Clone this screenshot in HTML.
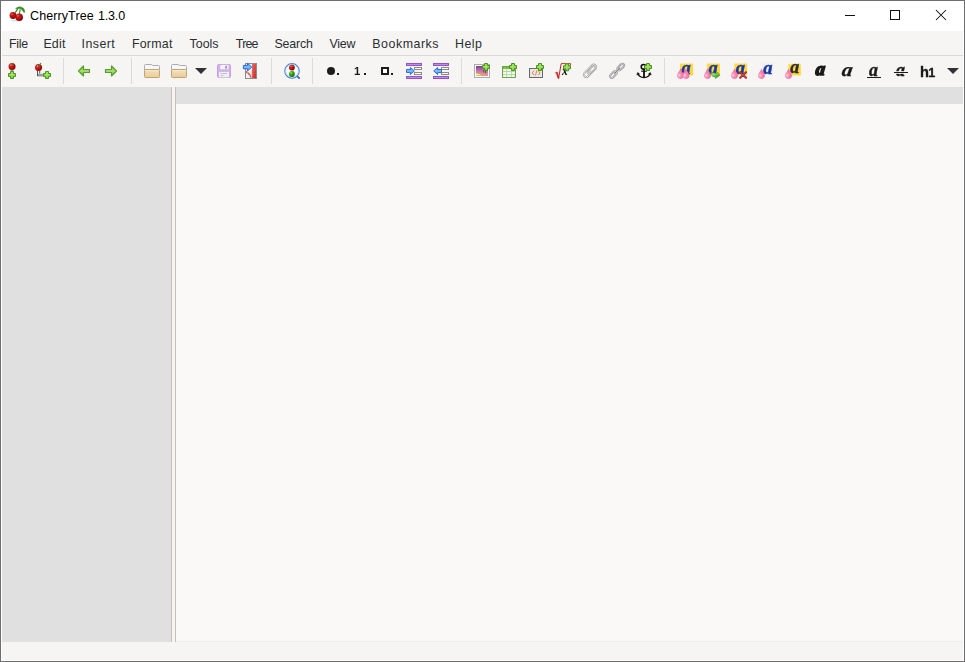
<!DOCTYPE html>
<html><head><meta charset="utf-8"><title>CherryTree 1.3.0</title>
<style>
html,body{margin:0;padding:0;}
body{width:965px;height:662px;overflow:hidden;position:relative;background:#f6f5f4;font-family:"Liberation Sans",sans-serif;color:#1a1a1a;}
.abs{position:absolute;}
#frame{left:0;top:0;width:963px;height:660px;border:1px solid #6e6e6e;z-index:50;pointer-events:none;}
#frame2{left:1px;top:1px;width:961px;height:658px;border:1px solid #fff;z-index:49;pointer-events:none;}
#title{left:1px;top:1px;width:963px;height:30px;background:#fff;}
#ttext{left:30px;top:9px;font-size:12.5px;color:#000;white-space:nowrap;}
#menu{left:2px;top:31px;width:961px;height:24px;background:#f6f5f4;border-bottom:1px solid #dbd9d6;}
.mi{position:absolute;top:37px;font-size:12.4px;color:#2a2e30;white-space:nowrap;}
#tb{left:2px;top:56px;width:961px;height:31px;background:#f6f5f4;}
.sep{position:absolute;top:58px;width:1px;height:26px;background:#dcdad7;}
#left{left:2px;top:87px;width:169px;height:555px;background:#e0e0e0;}
.vline{position:absolute;top:87px;width:1px;height:555px;background:#c6c0ba;}
#hdr{left:176px;top:87px;width:787px;height:17px;background:#e0e0e0;}
#text{left:176px;top:104px;width:787px;height:537px;background:#faf9f8;border-bottom:1px solid #eeedeb;}
#status{left:2px;top:642px;width:961px;height:18px;background:#f6f5f4;}
svg{position:absolute;overflow:visible;}
#tbicons,#tbicons2{will-change:transform;}
</style></head><body>
<div id="title" class="abs"></div>
<div id="ttext" class="abs"><span style="letter-spacing:0.1px">CherryTree</span><span class="abs" style="left:67.9px;top:0;letter-spacing:-0.15px">1.3.0</span></div>
<svg id="ticon" style="left:0;top:0" width="965" height="31" viewBox="0 0 965 31">
<ellipse cx="16.5" cy="20.6" rx="6" ry="1.2" fill="#cfe0e0" opacity="0.7"/>
<circle cx="13" cy="15.5" r="3.4" fill="url(#gCh2)"/>
<circle cx="19.2" cy="17.3" r="3.8" fill="url(#gCh2)"/>
<path d="M15.3 12.6L17.8 8.6M19.3 14.2L20.2 9.6" stroke="#2e8a14" stroke-width="1.1" fill="none"/>
<path d="M15.6 8.8c1.6-2.1 4.8-2.5 6.9-1.1c1.5 1 2.3 2.4 2 4.7c-1.1-0.3-1.7-1.3-2.2-2.5c-1.3-1.1-4-1.7-6.7-1.1z" fill="#2f9616" stroke="#2a8412" stroke-width="0.6"/>
<defs><radialGradient id="gCh2" cx="0.35" cy="0.3" r="0.75"><stop offset="0" stop-color="#e06464"/><stop offset="0.3" stop-color="#c01818"/><stop offset="0.75" stop-color="#a80808"/><stop offset="1" stop-color="#6c0000"/></radialGradient></defs>
<path d="M845 15.5h10" stroke="#111" stroke-width="1"/>
<rect x="890.5" y="10.5" width="9" height="9" fill="none" stroke="#111" stroke-width="1"/>
<path d="M936 10l10 10M946 10l-10 10" stroke="#111" stroke-width="1.05"/>
</svg>
<div id="menu" class="abs"></div>
<div class="mi" style="left:9px;letter-spacing:-0.3px">File</div>
<div class="mi" style="left:43.4px;letter-spacing:0.2px">Edit</div>
<div class="mi" style="left:81.6px;letter-spacing:0.44px">Insert</div>
<div class="mi" style="left:131.9px;letter-spacing:0.24px">Format</div>
<div class="mi" style="left:189.6px;letter-spacing:0.0px">Tools</div>
<div class="mi" style="left:235.8px;letter-spacing:-0.77px">Tree</div>
<div class="mi" style="left:274.4px;letter-spacing:-0.14px">Search</div>
<div class="mi" style="left:329.6px;letter-spacing:-0.27px">View</div>
<div class="mi" style="left:372.2px;letter-spacing:0.55px">Bookmarks</div>
<div class="mi" style="left:455px;letter-spacing:0.47px">Help</div>
<div id="tb" class="abs"></div>
<div class="sep" style="left:63px"></div>
<div class="sep" style="left:131px"></div>
<div class="sep" style="left:271px"></div>
<div class="sep" style="left:312px"></div>
<div class="sep" style="left:461px"></div>
<div class="sep" style="left:664px"></div>
<!--ICONS-->
<svg id="tbicons" style="left:0;top:56px" width="965" height="31" viewBox="0 56 965 31">
<defs>
<radialGradient id="gCh" cx="0.35" cy="0.3" r="0.75"><stop offset="0" stop-color="#f09090"/><stop offset="0.25" stop-color="#d02424"/><stop offset="0.7" stop-color="#b00c0c"/><stop offset="1" stop-color="#7c0404"/></radialGradient>
<radialGradient id="gGr" cx="0.35" cy="0.3" r="0.75"><stop offset="0" stop-color="#b0f070"/><stop offset="0.3" stop-color="#40b010"/><stop offset="0.75" stop-color="#1e8a08"/><stop offset="1" stop-color="#126004"/></radialGradient>
<linearGradient id="gPl" x1="0" y1="0" x2="0" y2="1"><stop offset="0" stop-color="#96e050"/><stop offset="1" stop-color="#6cc22c"/></linearGradient>
<linearGradient id="gAr" x1="0" y1="0" x2="0" y2="1"><stop offset="0" stop-color="#86c84a"/><stop offset="0.5" stop-color="#a6de70"/><stop offset="1" stop-color="#70bc34"/></linearGradient>
<linearGradient id="gFo" x1="0" y1="0" x2="0" y2="1"><stop offset="0" stop-color="#f3e0bf"/><stop offset="1" stop-color="#e8cc9c"/></linearGradient>
<linearGradient id="gBl" x1="0" y1="0" x2="0" y2="1"><stop offset="0" stop-color="#4a98f0"/><stop offset="0.5" stop-color="#7cc0ff"/><stop offset="1" stop-color="#3f8ae8"/></linearGradient>
<linearGradient id="gRd" x1="0" y1="0" x2="1" y2="1"><stop offset="0" stop-color="#ea6a58"/><stop offset="1" stop-color="#cf2a2a"/></linearGradient>
<linearGradient id="gPu" x1="0" y1="0" x2="0" y2="1"><stop offset="0" stop-color="#a865d8"/><stop offset="0.5" stop-color="#c08ae6"/><stop offset="1" stop-color="#a865d8"/></linearGradient>
<linearGradient id="gIm" x1="0" y1="0" x2="0" y2="1"><stop offset="0" stop-color="#7a3f96"/><stop offset="0.45" stop-color="#c070a8"/><stop offset="1" stop-color="#f2a49a"/></linearGradient>
<radialGradient id="gDr" cx="0.35" cy="0.65" r="0.7"><stop offset="0" stop-color="#ffc4da"/><stop offset="0.3" stop-color="#fb8db5"/><stop offset="1" stop-color="#f0609a"/></radialGradient>
<linearGradient id="gGa" x1="0" y1="0" x2="0.6" y2="1"><stop offset="0" stop-color="#6cc83c"/><stop offset="0.45" stop-color="#92dc64"/><stop offset="1" stop-color="#2c8a10"/></linearGradient>
<linearGradient id="gYe" x1="0" y1="0" x2="0" y2="1"><stop offset="0" stop-color="#fdf0c0"/><stop offset="0.13" stop-color="#ffd93c"/><stop offset="1" stop-color="#ffd632"/></linearGradient>
<g id="plus"><path d="M2.5 0.5h3v2h2v3h-2v2h-3v-2h-2v-3h2z" fill="url(#gPl)" stroke="#4a9422" stroke-width="1" stroke-linejoin="round"/><path d="M4 1.5v5M1.5 4h5" stroke="#c0f088" stroke-width="1" opacity="0.7"/></g>
<g id="drop"><path d="M3.5 0C4.1 2.3 6.9 4.6 6.9 7.1C6.9 9 5.4 10.4 3.5 10.4C1.6 10.4 0.1 9 0.1 7.1C0.1 4.6 2.9 2.3 3.5 0z" fill="url(#gDr)"/><ellipse cx="2" cy="6.8" rx="0.7" ry="1.1" fill="#ffd6e6" opacity="0.9"/></g>
<g id="folder"><path d="M0.5 6V1.5Q0.5 0.5 1.5 0.5H7.2Q8.2 0.5 8.6 1.5H14.5Q15.5 1.5 15.5 2.5V6z" fill="#f7f7f9" stroke="#a8aab4" stroke-width="1"/><rect x="0.5" y="5.5" width="15" height="8" rx="0.8" fill="url(#gFo)" stroke="#c2a56c" stroke-width="1"/><path d="M1.5 6.6h13" stroke="#f8ecd6" stroke-width="0.8"/></g>
</defs>
<!-- 1 node add -->
<path d="M10.5 70.5h3" stroke="#9a9a9a" stroke-width="1"/>
<circle cx="12.05" cy="66.5" r="3.5" fill="url(#gCh)"/>
<path d="M12 65l1.6-2" stroke="#2f9a1a" stroke-width="1.2"/>
<use href="#plus" x="8" y="71"/>
<!-- 2 subnode add -->
<path d="M37.5 71v5.2" stroke="#555" stroke-width="1"/><path d="M39.7 71v2.6" stroke="#4a4a4a" stroke-width="0.9"/>
<path d="M38 73.8h5.5v2.7H38z" fill="#9c9c9c"/>
<circle cx="38.55" cy="67.6" r="3.5" fill="url(#gCh)"/>
<path d="M38.6 66l2.4-2.8" stroke="#2f9a1a" stroke-width="1.2"/>
<use href="#plus" x="43" y="71"/>
<!-- arrows -->
<path d="M78.5 71l5-5v3.5h6v3h-6v3.5z" fill="url(#gAr)" stroke="#5a9e2a" stroke-width="1.2" stroke-linejoin="round"/>
<path d="M116.5 71l-5-5v3.5h-6v3h6v3.5z" fill="url(#gAr)" stroke="#5a9e2a" stroke-width="1.2" stroke-linejoin="round"/>
<!-- folders -->
<use href="#folder" x="144" y="64"/>
<use href="#folder" x="171" y="64"/>
<path d="M195 68h12l-6 6z" fill="#2e3436"/>
<!-- save (disabled) -->
<rect x="217.5" y="64.5" width="13" height="13" rx="1.3" fill="#d2b4ec" stroke="#c39de6" stroke-width="1"/>
<rect x="220.3" y="64.8" width="8.2" height="4.4" fill="#f4f2f6"/>
<rect x="225.2" y="65.8" width="1.7" height="2.9" fill="#a58fc0"/>
<rect x="219" y="72" width="10" height="5.4" fill="#f0eff0"/>
<path d="M220.5 73.5h6.5M220.5 75.5h3" stroke="#b9b9bd" stroke-width="0.8"/>
<!-- export pdf -->
<rect x="245.5" y="63.5" width="11" height="15" fill="#f1f0f0" stroke="#8e8e8e" stroke-width="1"/>
<path d="M252.4 64h3.6v14h-3.6z" fill="url(#gRd)"/>
<path d="M252.4 64l-2.2 14h2.2z" fill="#f3cfc8" opacity="0.8"/><path d="M252.6 64v14" stroke="#c83030" stroke-width="0.6"/>
<path d="M246 71.6c2.6 1.4 4.2 3.4 5 6.2" fill="none" stroke="#d83030" stroke-width="1.4" stroke-dasharray="1.5 0.4"/>
<path d="M243.4 65.4h4.2v-2l4.2 3.7l-4.2 3.7v-2h-4.2z" fill="url(#gBl)" stroke="#1f5fd0" stroke-width="0.9" stroke-linejoin="round"/>
<!-- find -->
<path d="M297.6 76.6l1.6 1.5" stroke="#2a62c8" stroke-width="1.7" stroke-linecap="round"/>
<circle cx="292" cy="70.9" r="7.2" fill="#fdfeff" stroke="#4a80d8" stroke-width="1.2"/>
<circle cx="292" cy="70.9" r="6.3" fill="none" stroke="#b8d4f8" stroke-width="0.9"/>
<circle cx="291.9" cy="67.6" r="2.9" fill="url(#gCh)"/>
<circle cx="291.9" cy="74" r="2.9" fill="url(#gGr)"/>
<path d="M292 65.6l0.9-1M292.6 71.6l0.9-1" stroke="#2fa01a" stroke-width="1"/>
<!-- lists -->
<circle cx="331" cy="71" r="4" fill="#1c1c1c"/><rect x="337" y="73" width="2" height="2" fill="#1c1c1c"/>
<text x="354" y="75" font-family="Liberation Sans,sans-serif" font-weight="bold" font-size="11.3" fill="#1c1c1c">1</text><rect x="364" y="73" width="2" height="2" fill="#1c1c1c"/>
<rect x="382" y="68" width="6" height="6" fill="#fff" stroke="#1c1c1c" stroke-width="2"/><rect x="391" y="73" width="2" height="2" fill="#1c1c1c"/>
<!-- indent -->
<g id="bars"><rect x="406.5" y="63.5" width="15" height="2" fill="#c08ae6" stroke="#9355cf" stroke-width="1"/><rect x="406.5" y="76.5" width="15" height="2" fill="#c08ae6" stroke="#9355cf" stroke-width="1"/><rect x="414.5" y="67.5" width="7" height="2" fill="#fff" stroke="#8a8a8a" stroke-width="1"/><rect x="414.5" y="72.5" width="7" height="2" fill="#fff" stroke="#8a8a8a" stroke-width="1"/></g>
<path d="M406.5 69.5h3.8v-2l4 3.5l-4 3.5v-2h-3.8z" fill="url(#gBl)" stroke="#2466d0" stroke-width="0.9" stroke-linejoin="round"/>
<use href="#bars" x="27"/>
<path d="M441.5 69.5h-3.8v-2l-4 3.5l4 3.5v-2h3.8z" fill="url(#gBl)" stroke="#2466d0" stroke-width="0.9" stroke-linejoin="round"/>
<!-- image -->
<rect x="474.5" y="64.5" width="15" height="13" fill="#fbfbfb" stroke="#acacac" stroke-width="1"/>
<rect x="476" y="66" width="12" height="10" fill="url(#gIm)"/>
<path d="M476 76v-3c3 0.2 5.6 1.2 7.6 3z" fill="#f0a040"/><path d="M476 76v-2.4c2.6 0.2 4.6 1 6.2 2.4z" fill="#ffe07a"/><path d="M476.4 75.6v-1.5c1.8 0.2 3.2 0.7 4.4 1.5z" fill="#fffad8"/><path d="M476 75.6h12" stroke="#c8944a" stroke-width="0.8" opacity="0.7"/>
<path d="M483.6 70.4v2M485.6 70.4v2.9" stroke="#3a2440" stroke-width="0.8" opacity="0.8"/>
<use href="#plus" x="482" y="63"/>
<!-- table -->
<rect x="502.5" y="66.5" width="13" height="11" fill="#b4d9a2" stroke="#69aa48" stroke-width="1"/>
<rect x="503" y="67" width="12" height="1.7" fill="#62b02c"/><path d="M504 67.9h2.4M507.6 67.9h2.6" stroke="#a8e070" stroke-width="0.6"/>
<g fill="#fff"><rect x="503.2" y="69.2" width="3" height="1.8"/><rect x="507.1" y="69.2" width="3.8" height="1.8"/><rect x="511.9" y="69.2" width="3" height="1.8"/><rect x="503.2" y="72.2" width="3" height="1.8"/><rect x="507.1" y="72.2" width="3.8" height="1.8"/><rect x="511.9" y="72.2" width="3" height="1.8"/><rect x="503.2" y="75.2" width="3" height="1.8"/><rect x="507.1" y="75.2" width="3.8" height="1.8"/><rect x="511.9" y="75.2" width="3" height="1.8"/></g>
<use href="#plus" x="509" y="63"/>
<!-- codebox -->
<rect x="529.5" y="68.5" width="13" height="9" fill="#e8e8e8" stroke="#686868" stroke-width="1"/>
<path d="M534 70.6l-1.7 2.3l1.7 2.3M538.3 70.6l1.7 2.3l-1.7 2.3M537 70.2l-1.6 5.4" fill="none" stroke="#f0742a" stroke-width="0.9"/>
<use href="#plus" x="536" y="63"/>
<!-- latex -->
<path d="M555.2 73l1.7-0.9" stroke="#d81c1c" stroke-width="0.9" fill="none"/><path d="M556.7 72.2l1.9 6.2" stroke="#d81c1c" stroke-width="1.7" fill="none"/><path d="M558.6 78.6l2.5-14.6" stroke="#d81c1c" stroke-width="1" fill="none"/><path d="M561 63.6h9.6v1.6h-0.9" stroke="#d81c1c" stroke-width="0.9" fill="none"/>
<text x="562" y="75" font-family="Liberation Serif,serif" font-style="italic" font-weight="bold" font-size="11.5" fill="#111">x</text>
<use href="#plus" x="563" y="63.3"/>
<!-- clip -->
<g transform="translate(590 70.85) rotate(-45)" fill="none"><rect x="-7.6" y="-2.4" width="15.2" height="4.8" rx="2.4" stroke="#9a9a9a" stroke-width="1.9"/><rect x="-7.6" y="-2.4" width="15.2" height="4.8" rx="2.4" stroke="#f2f2f2" stroke-width="0.9"/><rect x="-2.9" y="-1.0" width="8.9" height="2.7" rx="1.35" stroke="#989898" stroke-width="1.8"/><rect x="-2.9" y="-1.0" width="8.9" height="2.7" rx="1.35" stroke="#ececec" stroke-width="0.8"/><rect x="1.2" y="-0.3" width="4" height="1.3" rx="0.6" fill="#fff"/></g>
<!-- chain -->
<g transform="translate(617.1 70.8) rotate(-45)" fill="none"><path d="M-4 0h8" stroke="#858585" stroke-width="1.1"/><rect x="-9.2" y="-1.75" width="8" height="3.5" rx="1.75" stroke="#8a8a8a" stroke-width="1.9"/><rect x="-9.2" y="-1.75" width="8" height="3.5" rx="1.75" stroke="#e8e8e8" stroke-width="0.8"/><rect x="1.2" y="-1.75" width="8" height="3.5" rx="1.75" stroke="#8a8a8a" stroke-width="1.9"/><rect x="1.2" y="-1.75" width="8" height="3.5" rx="1.75" stroke="#e8e8e8" stroke-width="0.8"/><path d="M-3.5 0h7" stroke="#858585" stroke-width="0.9"/></g>
<!-- anchor -->
<g fill="none" stroke="#111"><circle cx="643.5" cy="66.8" r="2.3" stroke-width="1.6"/><path d="M644 69v8.5" stroke-width="1.8"/><path d="M641.2 71.2h5.6" stroke-width="1.1"/><path d="M638 73.6c0.8 2.6 3 3.9 6 3.9s5.2-1.3 6-3.9" stroke-width="1.4"/><path d="M636.8 75l0.8-2.6l2 1.6zM651.2 75l-0.8-2.6l-2 1.6z" fill="#111" stroke-width="0.5"/></g>
<use href="#plus" x="644" y="63"/>
</svg>
<svg id="tbicons2" style="left:0;top:56px" width="965" height="31" viewBox="0 56 965 31">
<g font-family="Liberation Serif,serif" font-style="italic" font-weight="bold">
<!-- A: fg+bg -->
<rect x="680" y="63" width="13" height="12.4" fill="url(#gYe)"/>
<text x="681.6" y="73.5" font-size="18.5" fill="#1838a8" stroke="#1838a8" stroke-width="0.45">a</text>
<use href="#drop" x="677" y="68.6"/><use href="#drop" x="682.5" y="68.6"/>
<!-- B -->
<rect x="707" y="63" width="13" height="12.4" fill="url(#gYe)"/>
<text x="708.6" y="73.5" font-size="18.5" fill="#1838a8" stroke="#1838a8" stroke-width="0.45">a</text>
<use href="#drop" x="704" y="68.6"/>
<path d="M711.2 71.4C712.5 72.6 714.6 73.3 717 73.2L717.5 72.2L720 75.3L715.4 78.5L715.7 77C713.6 77.1 711.8 76 711.2 74.4z" fill="url(#gGa)" stroke="#3a9018" stroke-width="0.5" stroke-linejoin="round"/>
<!-- C -->
<rect x="734.4" y="63" width="12.6" height="12.2" fill="url(#gYe)"/>
<text x="735.8" y="73.5" font-size="18.5" fill="#1838a8" stroke="#1838a8" stroke-width="0.45">a</text>
<use href="#drop" x="731" y="68.6"/>
<path d="M740.2 72.2l5.8 5.6M746 72.2l-5.8 5.6" stroke="#a82434" stroke-width="2.1" stroke-linecap="round"/>
<path d="M740.6 72.6l5 4.8M745.6 72.6l-5 4.8" stroke="#d8606a" stroke-width="0.6"/>
<!-- D -->
<rect x="762" y="63.4" width="11.4" height="11.4" fill="#efeff1"/>
<text x="763.2" y="73.5" font-size="18.5" fill="#1838a8" stroke="#1838a8" stroke-width="0.45">a</text>
<use href="#drop" x="758" y="68.6"/>
<!-- E -->
<rect x="788.4" y="63.4" width="12.4" height="12" fill="url(#gYe)"/>
<text x="790.2" y="73.4" font-size="18" fill="#2a2c3c" stroke="#2a2c3c" stroke-width="0.4">a</text>
<use href="#drop" x="785" y="68.6"/>
<!-- F bold -->
<text transform="translate(815.2 75.4) skewX(-6)" font-size="18.5" fill="#1a1a1a" stroke="#1a1a1a" stroke-width="1.7" stroke-linejoin="round">a</text>
<!-- italic -->
<text transform="translate(841.2 76.2) skewX(-8) scale(1.12 1)" font-size="19" fill="#1a1a1a" stroke="#1a1a1a" stroke-width="0.3">a</text>
<!-- underline -->
<text x="869" y="75.8" font-size="18" fill="#1a1a1a" stroke="#1a1a1a" stroke-width="0.35">a</text>
<rect x="867" y="77" width="14" height="1" fill="#1a1a1a"/>
<!-- strike -->
<text x="896" y="76.4" font-size="18" fill="#1a1a1a" stroke="#1a1a1a" stroke-width="0.4">a</text>
<rect x="893" y="71.2" width="16" height="2.6" fill="#f6f5f4"/>
<rect x="894" y="72" width="14" height="1" fill="#1a1a1a"/>
</g>
<text x="919.9" y="76.7" font-family="Liberation Sans,sans-serif" font-weight="bold" fill="#1a1a1a" stroke="#1a1a1a" stroke-width="0.35" font-size="14.6">h</text><text transform="translate(928.2 76.7) scale(1.05 1)" font-family="Liberation Sans,sans-serif" font-weight="bold" fill="#1a1a1a" stroke="#1a1a1a" stroke-width="0.35" font-size="12">1</text>
<path d="M947 68h12l-6 6z" fill="#2e3436"/>
</svg>
<!--/ICONS-->
<div id="left" class="abs"></div>
<div class="vline" style="left:171px"></div>
<div class="vline" style="left:175px"></div>
<div id="hdr" class="abs"></div>
<div id="text" class="abs"></div>
<div id="status" class="abs"></div>
<div id="frame2" class="abs"></div>
<div id="frame" class="abs"></div>
</body></html>
